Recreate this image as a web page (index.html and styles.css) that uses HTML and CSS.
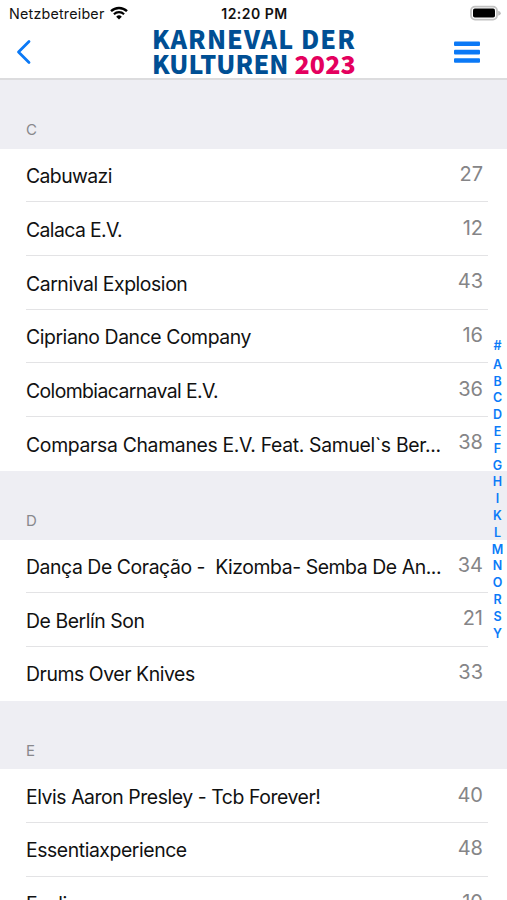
FILE: index.html
```html
<!DOCTYPE html>
<html lang="de">
<head>
<meta charset="utf-8">
<meta name="viewport" content="width=device-width, initial-scale=1">
<title>Karneval der Kulturen 2023</title>
<link rel="stylesheet" href="styles.css">
</head>
<body>
<div class="app">
  <header class="top">
    <div class="status">
      <div class="carrier"><span>Netzbetreiber</span>
        <svg class="wifi" viewBox="0 0 18 14" width="18" height="14"><path d="M1 5.2a11.6 11.6 0 0 1 16 0" fill="none" stroke="#000" stroke-width="2.4"/><path d="M3.9 8.2a7.4 7.4 0 0 1 10.2 0" fill="none" stroke="#000" stroke-width="2.1"/><path d="M6.2 10.7a4 4 0 0 1 5.6 0L9 13.4z"/></svg>
      </div>
      <div class="clock">12:20 PM</div>
      <svg class="battery" viewBox="0 0 32 16" width="32" height="16"><rect x="1" y="1.6" width="26" height="13" rx="4" fill="#fff" stroke="#c2c2c2" stroke-width="1.8"/><rect x="3" y="3.6" width="22" height="9" rx="1.8"/><path d="M28.2 5.8q2.6.7 2.6 2.5t-2.6 2.5z" fill="#bbb"/></svg>
    </div>
    <nav class="nav">
      <svg class="back" viewBox="0 0 16 26" width="16" height="26"><path d="M13 2.5 2.5 13 13 23.5" fill="none" stroke="#0b79f6" stroke-width="2.8" stroke-linecap="round" stroke-linejoin="round"/></svg>
      <h1 class="logo"><span class="line1">KARNEVAL DER</span><span class="line2">KULTUREN <b>2023</b></span></h1>
      <svg class="menu" viewBox="0 0 26 23" width="26" height="23"><g fill="#0b79f6"><rect y="0.4" width="26" height="4.6" rx="1"/><rect y="8.8" width="26" height="4.6" rx="1"/><rect y="17.2" width="26" height="4.6" rx="1"/></g></svg>
    </nav>
  </header>
  <main>
    <section>
      <h2>C</h2>
      <ul>
        <li><span class="name tight">Cabuwazi</span><span class="num">27</span></li>
        <li><span class="name tight">Calaca E.V.</span><span class="num">12</span></li>
        <li><span class="name">Carnival Explosion</span><span class="num">43</span></li>
        <li><span class="name">Cipriano Dance Company</span><span class="num">16</span></li>
        <li><span class="name tight">Colombiacarnaval E.V.</span><span class="num">36</span></li>
        <li><span class="name loose">Comparsa Chamanes E.V. Feat. Samuel`s Ber...</span><span class="num">38</span></li>
      </ul>
    </section>
    <section>
      <h2>D</h2>
      <ul>
        <li><span class="name">Dança De Coração -&nbsp; Kizomba- Semba De An...</span><span class="num">34</span></li>
        <li><span class="name">De Berlín Son</span><span class="num">21</span></li>
        <li><span class="name">Drums Over Knives</span><span class="num">33</span></li>
      </ul>
    </section>
    <section>
      <h2>E</h2>
      <ul>
        <li><span class="name">Elvis Aaron Presley - Tcb Forever!</span><span class="num">40</span></li>
        <li><span class="name">Essentiaxperience</span><span class="num">48</span></li>
        <li><span class="name">Eyeline</span><span class="num">10</span></li>
      </ul>
    </section>
  </main>
  <aside class="index"><span class="hash">#</span><span>A</span><span>B</span><span>C</span><span>D</span><span>E</span><span>F</span><span>G</span><span>H</span><span>I</span><span>K</span><span>L</span><span>M</span><span>N</span><span>O</span><span>R</span><span>S</span><span>Y</span></aside>
</div>
</body>
</html>
```
FILE: styles.css
```css
* { box-sizing: border-box; margin: 0; padding: 0; }
body { background: #fff; font-family: Inter, "Liberation Sans", sans-serif; color: #111; }
.app { position: relative; height: 900px; overflow: hidden; }
.top { height: 80px; background: #fff; border-bottom: 2px solid #dcdcde; }
.status { display: grid; grid-template-columns: 1fr auto 1fr; align-items: center; height: 26px; padding: 0 5px 0 9px; }
.carrier { display: flex; align-items: center; gap: 6px; font-size: 14.3px; letter-spacing: 0.2px; }
.clock { position: relative; left: -1px; font-size: 14px; font-weight: 600; letter-spacing: 0.5px; }
.battery { justify-self: end; }
.nav { display: grid; grid-template-columns: 1fr auto 1fr; align-items: center; height: 52px; padding: 0 27px 0 16px; }
.menu { justify-self: end; }
.logo { position: relative; left: 6px; top: -1px; display: flex; flex-direction: column; color: #004f94; font-family: "Noto Sans CJK SC", "Noto Sans", sans-serif; font-weight: 900; font-size: 25px; line-height: 25.2px; white-space: nowrap; }
.line1 { letter-spacing: 1.1px; }
.line2 { letter-spacing: 0.15px; }
.logo b { color: #e4005e; font-weight: 900; }
h2 { display: flex; align-items: flex-end; height: 68.8px; padding: 0 26px 8.5px; background: #eeeef3; color: #88888c; font-size: 15px; font-weight: 400; line-height: 20px; }
ul { list-style: none; background: #fff; }
li { display: flex; align-items: center; justify-content: space-between; height: 53.66px; margin-left: 26px; margin-right: 19px; padding: 2.4px 5px 0 0; border-bottom: 1px solid #e3e3e5; white-space: nowrap; }
li:last-child { border-color: transparent; }
.name { font-size: 19.4px; letter-spacing: -0.43px; }
.tight { letter-spacing: -0.6px; }
.loose { letter-spacing: -0.33px; }
.num { font-size: 20px; color: #858587; padding-bottom: 4.6px; }
.index { position: absolute; right: 3px; top: 338px; width: 13px; display: flex; flex-direction: column; align-items: center; color: #0b7bf8; font-size: 12.5px; font-weight: 600; line-height: 16.8px; }
.hash { margin-bottom: 2px; }
```
